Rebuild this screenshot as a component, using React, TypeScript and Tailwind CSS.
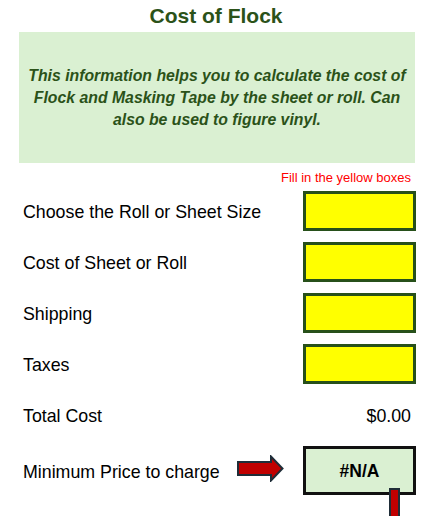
import type { FC } from "react";

const inputRows = ["Choose the Roll or Sheet Size", "Cost of Sheet or Roll", "Shipping", "Taxes"];

const Arrow: FC = () => {
  return (
    <svg width="47" height="27" viewBox="0 0 47 27" className="mr-[19px] mt-[9px] self-start">
      <polygon
        points="1,7 34,7 34,1.5 45.5,13.5 34,25.5 34,20 1,20"
        fill="#c00000"
        stroke="#1f2d38"
        strokeWidth="2"
        strokeLinejoin="miter"
      />
    </svg>
  );
};

export default function App() {
  return (
    <div className="h-[516px] w-[432px] overflow-hidden bg-white font-['Liberation_Sans',Arial,sans-serif]">
      <h1 className="h-[32px] pt-[4px] text-center text-[21px] leading-[24px] font-bold text-[#2b5219]">
        Cost of Flock
      </h1>

      <div className="mx-[19px] flex h-[131px] w-[396px] items-center justify-center bg-[#daf0d2] pt-[1px]">
        <p className="text-center text-[15.8px] leading-[22px] font-bold text-[#2b5219] italic">
          This information helps you to calculate the cost of
          <br />
          Flock and Masking Tape by the sheet or roll. Can
          <br />
          also be used to figure vinyl.
        </p>
      </div>

      <p className="mt-[7px] h-[16px] pr-[21px] text-right text-[13px] leading-[16px] text-[#ff0000]">
        Fill in the yellow boxes
      </p>

      <div className="mt-[5px] flex flex-col gap-[11px] text-[17.8px] leading-none text-black">
        {inputRows.map((label) => {
          return (
            <div key={label} className="flex h-[40px] items-center">
              <span className="flex-1 pt-[4px] pl-[23px]">{label}</span>
              <div className="mr-[16px] h-[40px] w-[113px] border-[3px] border-[#27501a] bg-[#ffff00]" />
            </div>
          );
        })}

        <div className="flex h-[40px] items-center">
          <span className="flex-1 pt-[4px] pl-[23px]">Total Cost</span>
          <span className="mr-[16px] w-[113px] pt-[4px] pr-[5px] text-right">$0.00</span>
        </div>

        <div className="flex h-[49px] items-center">
          <span className="flex-1 pt-[4px] pl-[23px]">Minimum Price to charge</span>
          <Arrow />
          <div className="relative mr-[16px] flex h-[49px] w-[113px] items-center justify-center border-[3px] border-[#111111] bg-[#daf0d2]">
            <span className="pt-[2px] text-[17.5px] font-bold">#N/A</span>
            <div className="absolute top-[39px] left-[83px] h-[40px] w-[11px] border-2 border-[#1f2d38] bg-[#c00000]" />
          </div>
        </div>
      </div>
    </div>
  );
}
